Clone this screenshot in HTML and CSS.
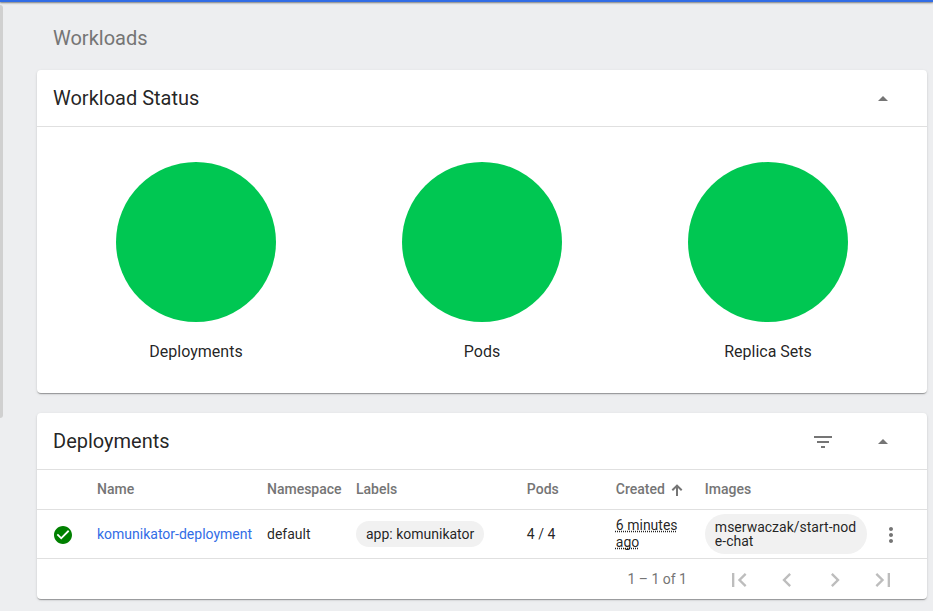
FILE: index.html
```html
<!DOCTYPE html>
<html lang="en">
<head>
<meta charset="utf-8">
<meta name="viewport" content="width=device-width, initial-scale=1">
<title>Workloads</title>
<link rel="stylesheet" href="styles.css">
</head>
<body>
<div class="topbar"></div>
<div class="shell">
  <div class="rail"><div class="rail-thumb"></div></div>
  <main class="content">
    <h1 class="page-title">Workloads</h1>

    <section class="card">
      <header class="card-header">
        <h2 class="card-title">Workload Status</h2>
        <button class="icon-button" type="button" aria-label="Collapse workload status">
          <svg class="icon" viewBox="0 0 24 24"><path d="M7 14l5-5 5 5z"/></svg>
        </button>
      </header>
      <div class="charts">
        <figure class="chart">
          <svg class="pie" viewBox="0 0 160 160"><circle cx="80" cy="80" r="80"/></svg>
          <figcaption>Deployments</figcaption>
        </figure>
        <figure class="chart">
          <svg class="pie" viewBox="0 0 160 160"><circle cx="80" cy="80" r="80"/></svg>
          <figcaption>Pods</figcaption>
        </figure>
        <figure class="chart">
          <svg class="pie" viewBox="0 0 160 160"><circle cx="80" cy="80" r="80"/></svg>
          <figcaption>Replica Sets</figcaption>
        </figure>
      </div>
    </section>

    <section class="card">
      <header class="card-header">
        <h2 class="card-title">Deployments</h2>
        <button class="icon-button" type="button" aria-label="Filter">
          <svg class="icon" viewBox="0 0 24 24"><path d="M10 18h4v-2h-4v2zM3 6v2h18V6H3zm3 7h12v-2H6v2z"/></svg>
        </button>
        <button class="icon-button" type="button" aria-label="Collapse deployments">
          <svg class="icon" viewBox="0 0 24 24"><path d="M7 14l5-5 5 5z"/></svg>
        </button>
      </header>
      <table class="table">
        <colgroup>
          <col class="col-status"><col class="col-name"><col class="col-narrow"><col class="col-labels">
          <col class="col-narrow"><col class="col-narrow"><col><col class="col-menu">
        </colgroup>
        <thead>
          <tr>
            <th></th>
            <th>Name</th>
            <th>Namespace</th>
            <th>Labels</th>
            <th>Pods</th>
            <th>
              <span class="sorted">Created
                <svg class="sort-arrow" viewBox="0 0 12 12"><path d="M5 12h2V4l3 3 1.400-1.400L6 .2.6 5.600 2 7l3-3z"/></svg>
              </span>
            </th>
            <th>Images</th>
            <th></th>
          </tr>
        </thead>
        <tbody>
          <tr>
            <td class="status">
              <svg class="status-icon" viewBox="2 2 20 20" role="img" aria-label="Healthy"><path d="M12 2C6.480 2 2 6.480 2 12s4.480 10 10 10 10-4.480 10-10S17.520 2 12 2zm-2 15l-5-5 1.410-1.410L10 14.170l7.590-7.590L19 8l-9 9z"/></svg>
            </td>
            <td><a class="link" href="#">komunikator-deployment</a></td>
            <td>default</td>
            <td><span class="chip">app: komunikator</span></td>
            <td>4 / 4</td>
            <td><span class="age">6 minutes ago</span></td>
            <td><span class="chip">mserwaczak/start-node-chat</span></td>
            <td>
              <button class="menu-button" type="button" aria-label="Actions">
                <svg class="icon" viewBox="0 0 24 24"><path d="M12 8c1.100 0 2-.9 2-2s-.9-2-2-2-2 .9-2 2 .9 2 2 2zm0 2c-1.100 0-2 .9-2 2s.9 2 2 2 2-.9 2-2-.9-2-2-2zm0 6c-1.100 0-2 .9-2 2s.9 2 2 2 2-.9 2-2-.9-2-2-2z"/></svg>
              </button>
            </td>
          </tr>
        </tbody>
      </table>
      <footer class="paginator">
        <span class="range">1 – 1 of 1</span>
        <button class="page-button" type="button" disabled aria-label="First page">
          <svg class="page-icon" viewBox="0 0 24 24"><path d="M18.410 16.590L13.820 12l4.590-4.590L17 6l-6 6 6 6zM6 6h2v12H6z"/></svg>
        </button>
        <button class="page-button" type="button" disabled aria-label="Previous page">
          <svg class="page-icon" viewBox="0 0 24 24"><path d="M15.410 7.410L14 6l-6 6 6 6 1.410-1.410L10.830 12z"/></svg>
        </button>
        <button class="page-button" type="button" disabled aria-label="Next page">
          <svg class="page-icon" viewBox="0 0 24 24"><path d="M10 6L8.590 7.410 13.170 12l-4.580 4.590L10 18l6-6z"/></svg>
        </button>
        <button class="page-button" type="button" disabled aria-label="Last page">
          <svg class="page-icon" viewBox="0 0 24 24"><path d="M5.590 7.410L10.180 12l-4.590 4.590L7 18l6-6-6-6zM16 6h2v12h-2z"/></svg>
        </button>
      </footer>
    </section>
  </main>
</div>
</body>
</html>
```
FILE: styles.css
```css
* {
  box-sizing: border-box;
}

body {
  margin: 0;
  background: #edeef0;
  color: rgba(0, 0, 0, 0.87);
  font: 14px/17px Roboto, sans-serif;
}

button {
  display: flex;
  align-items: center;
  justify-content: center;
  padding: 2px 0 0;
  border: 0;
  background: none;
  color: #757575;
}

.topbar {
  position: relative;
  height: 2px;
  background: #326de6;
  box-shadow: 0 1px 2px rgba(0, 0, 0, 0.5);
}

.shell {
  display: flex;
}

.rail {
  flex: none;
  width: 3px;
  padding-top: 3px;
}

.rail-thumb {
  height: 413px;
  border-radius: 0 3px 3px 0;
  background: #d0d0d0;
}

.content {
  flex: 1;
  min-width: 0;
  padding: 24px 6px 12px 34px;
}

.page-title,
.card-title {
  margin: 0;
  font-size: 20px;
  font-weight: 400;
  line-height: 24px;
}

.page-title {
  padding: 0 16px;
  margin-bottom: 20px;
  color: #757575;
}

.card {
  margin-bottom: 20px;
  border-radius: 4px;
  background: #fff;
  box-shadow: 0 2px 1px -1px rgba(0, 0, 0, 0.2), 0 1px 1px rgba(0, 0, 0, 0.14), 0 1px 3px rgba(0, 0, 0, 0.12);
}

.card-header {
  display: flex;
  align-items: center;
  gap: 20px;
  height: 57px;
  padding: 0 24px 0 16px;
  border-bottom: 1px solid #e0e0e0;
}

.card-title {
  flex: 1;
}

.icon-button {
  width: 40px;
  height: 40px;
}

.icon {
  width: 24px;
  height: 24px;
  fill: currentColor;
}

.charts {
  display: grid;
  grid-template-columns: repeat(3, 1fr);
  padding: 35px 16px 32px;
}

.chart {
  display: flex;
  flex-direction: column;
  align-items: center;
  gap: 20px;
  margin: 0;
  font-size: 16px;
  line-height: 19px;
}

.pie {
  width: 160px;
  height: 160px;
  fill: #00c752;
}

.table {
  width: 100%;
  border-collapse: separate;
  border-spacing: 0;
  table-layout: fixed;
}

.col-status {
  width: 60px;
}

.col-name {
  width: 19.1%;
}

.col-labels {
  width: 19.2%;
}

.col-narrow {
  width: 10%;
}

.col-menu {
  width: 52px;
}

th,
td {
  padding: 0 8px 0 0;
  border-bottom: 1px solid #e0e0e0;
  text-align: left;
  vertical-align: middle;
}

th {
  height: 40px;
  color: #757575;
  font-weight: 500;
  white-space: nowrap;
}

td {
  height: 49px;
}

.sorted {
  display: flex;
  align-items: center;
  gap: 6px;
}

.sort-arrow {
  width: 12px;
  height: 12px;
  fill: currentColor;
}

.status {
  padding-top: 2px;
  padding-left: 17px;
}

.status-icon {
  display: block;
  width: 18px;
  height: 18px;
  fill: #008000;
}

.link {
  color: #326de6;
  text-decoration: none;
}

.chip {
  display: inline-block;
  max-width: 100%;
  padding: 6px 10px;
  border-radius: 20px;
  background: #f1f1f1;
  line-height: 14px;
  overflow-wrap: anywhere;
  word-break: break-all;
  vertical-align: middle;
}

.age {
  text-decoration: underline dotted;
  text-decoration-skip-ink: none;
}

.menu-button {
  width: 32px;
  height: 32px;
}

.paginator {
  display: flex;
  align-items: center;
  justify-content: flex-end;
  gap: 8px;
  height: 40px;
  padding-right: 24px;
}

.range {
  margin-right: 24px;
  color: #757575;
}

.page-button {
  width: 40px;
  height: 40px;
  color: #bdbdbd;
}

.page-icon {
  width: 28px;
  height: 28px;
  fill: currentColor;
}
```
